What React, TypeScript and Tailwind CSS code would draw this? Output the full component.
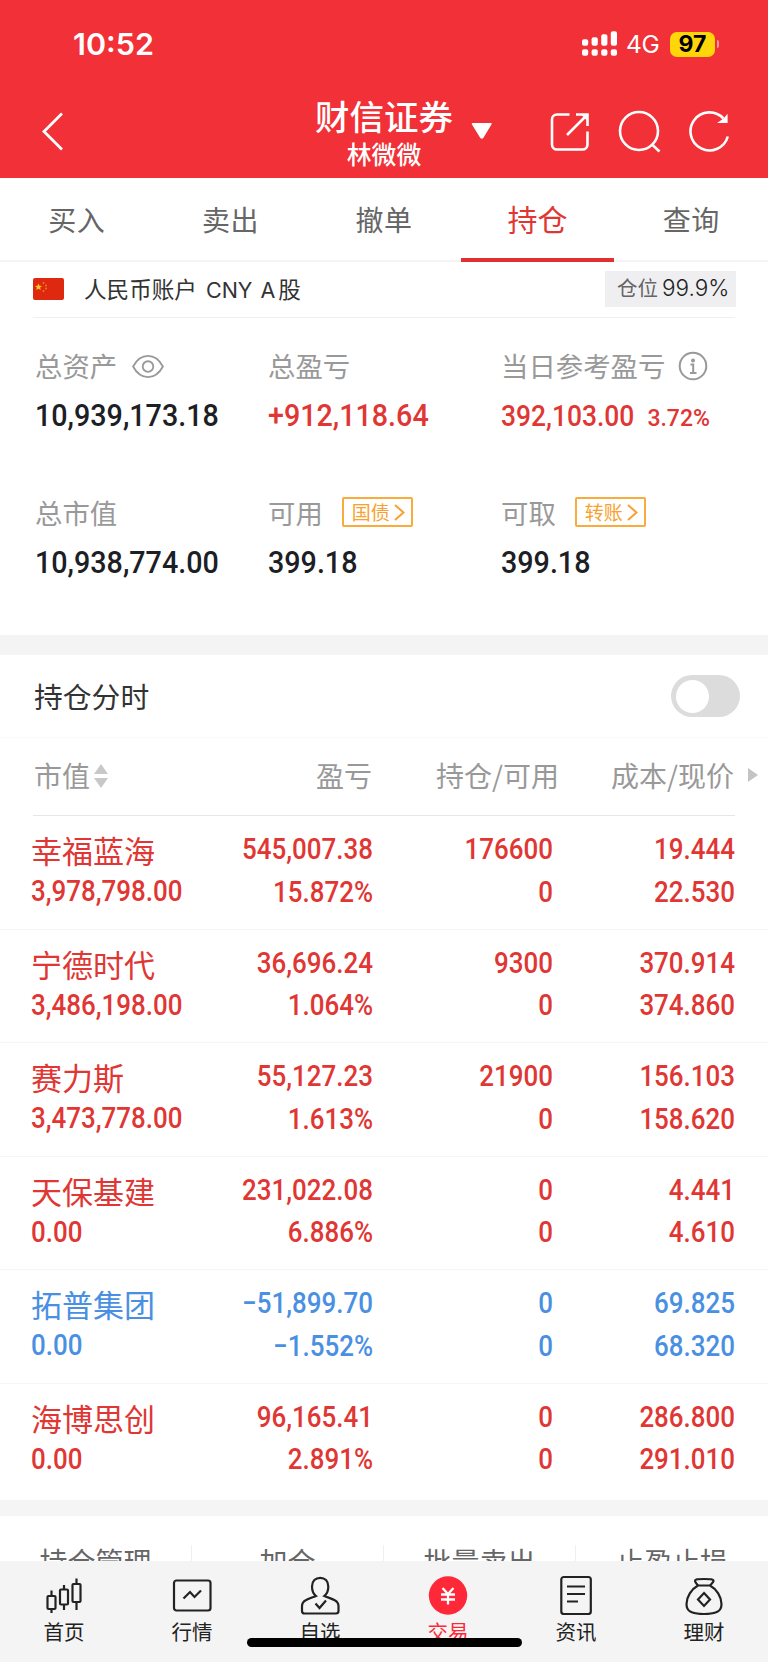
import { clsx } from "clsx"

type Holding = {
  name: string
  value: string
  profit: string
  rate: string
  amount: string
  available: string
  cost: string
  price: string
  down?: boolean
}

const TABS = ["买入", "卖出", "撤单", "持仓", "查询"]

const HOLDINGS: Holding[] = [
  { name: "幸福蓝海", value: "3,978,798.00", profit: "545,007.38", rate: "15.872%", amount: "176600", available: "0", cost: "19.444", price: "22.530" },
  { name: "宁德时代", value: "3,486,198.00", profit: "36,696.24", rate: "1.064%", amount: "9300", available: "0", cost: "370.914", price: "374.860" },
  { name: "赛力斯", value: "3,473,778.00", profit: "55,127.23", rate: "1.613%", amount: "21900", available: "0", cost: "156.103", price: "158.620" },
  { name: "天保基建", value: "0.00", profit: "231,022.08", rate: "6.886%", amount: "0", available: "0", cost: "4.441", price: "4.610" },
  { name: "拓普集团", value: "0.00", profit: "−51,899.70", rate: "−1.552%", amount: "0", available: "0", cost: "69.825", price: "68.320", down: true },
  { name: "海博思创", value: "0.00", profit: "96,165.41", rate: "2.891%", amount: "0", available: "0", cost: "286.800", price: "291.010" },
]

const ACTIONS = ["持仓管理", "加仓", "批量卖出", "止盈止损"]

function StatusBar() {
  return (
    <div className="flex h-[88px] items-center pl-[73px] pr-[49px] font-['Inter',sans-serif] text-white">
      <span className="text-[30.5px] font-semibold leading-none">10:52</span>
      <svg className="ml-auto" width="36" height="26" viewBox="0 0 36 26" fill="currentColor">
        <rect x="0" y="8.3" width="6.2" height="6.400" rx="2" />
        <rect x="9.600" y="6.300" width="6.200" height="8.400" rx="2" />
        <rect x="19.200" y="3.300" width="6.200" height="11.400" rx="2" />
        <rect x="28.800" y="0.300" width="6.200" height="14.400" rx="2" />
        <rect x="0" y="18.200" width="6.200" height="6.500" rx="2" />
        <rect x="9.600" y="18.200" width="6.200" height="6.500" rx="2" />
        <rect x="19.200" y="18.200" width="6.200" height="6.500" rx="2" />
        <rect x="28.800" y="18.200" width="6.200" height="6.500" rx="2" />
      </svg>
      <span className="ml-[8px] w-[34px] text-[24.500px] leading-none tracking-[-0.300px]">4G</span>
      <span className="ml-[10px] flex h-[25px] w-[45px] items-center justify-center rounded-[7px] bg-[#ffd60a] text-[23px] font-bold leading-none text-black">
        97
      </span>
      <span className="ml-[2px] h-[8px] w-[2px] rounded-r-full bg-white/50" />
    </div>
  )
}

function NavBar() {
  return (
    <div className="grid h-[90px] grid-cols-[300px_168px_300px] items-start text-white">
      <svg className="ml-[41px] mt-[24px]" width="23" height="39" viewBox="0 0 23 39" fill="none" stroke="currentColor" strokeWidth="2.800">
        <path d="M21 1.500 3 19.500 21 37.500" />
      </svg>
      <div className="text-center">
        <div className="mt-[7px] h-[40px] text-[34.500px] font-medium leading-[40px] whitespace-nowrap">财信证券</div>
        <div className="mt-[3px] h-[30px] text-[24.800px] font-medium leading-[30px]">林微微</div>
      </div>
      <div className="flex items-start">
        <svg className="ml-[3px] mt-[34px]" width="22" height="18" viewBox="0 0 22 18" fill="currentColor">
          <path d="M1.500 1h18.500a.8.8 0 0 1 .6 1.200L12.300 16a1.800 1.800 0 0 1-3 0L.8 2.200A.8.8 0 0 1 1.500 1z" />
        </svg>
        <svg className="ml-[55px] mt-[22px]" width="42" height="42" viewBox="0 0 42 42" fill="none" stroke="currentColor" strokeWidth="2.600">
          <path d="M21.500 4.500H9a5 5 0 0 0-5 5V34.500a5 5 0 0 0 5 5H34.500a5 5 0 0 0 5-5V21.500" />
          <path d="M19 25 38.500 5.500M28 4.500h11.500V16" />
          <path d="M33 4.500h6.500V11z" fill="currentColor" stroke="none" />
        </svg>
        <svg className="ml-[28px] mt-[22px]" width="44" height="44" viewBox="0 0 44 44" fill="none" stroke="currentColor" strokeWidth="2.600">
          <circle cx="21" cy="21" r="19" />
          <path d="m34 34.500 7.500 7" />
        </svg>
        <svg className="ml-[27px] mt-[22px]" width="44" height="44" viewBox="0 0 44 44" fill="none" stroke="currentColor" strokeWidth="2.600">
          <path d="M38.800 26.500A19 19 0 1 1 34.500 8.500" />
          <path d="M30 12.500H38V5.500L35.500 8.500z" fill="currentColor" stroke="currentColor" strokeWidth="1.200" />
        </svg>
      </div>
    </div>
  )
}

function Tabs() {
  return (
    <div className="grid h-[84px] grid-cols-5 border-b-2 border-[#f4f4f5] text-center">
      {TABS.map((tab) => (
        <div
          key={tab}
          className={clsx(
            "relative h-[84px]",
            tab === "持仓" ? "text-[30px] leading-[81px] text-[#e03634]" : "pt-px text-[28px] leading-[81px] tracking-[0.500px] text-[#666]",
          )}
        >
          {tab}
          {tab === "持仓" && <span className="absolute inset-x-0 bottom-0 h-[4px] bg-[#e03030]" />}
        </div>
      ))}
    </div>
  )
}

function AccountBar() {
  return (
    <div className="mx-[33px] flex h-[56px] items-center border-b border-[#f0f0f0]">
      <svg className="mt-[-2px]" width="31" height="22" viewBox="0 0 31 22">
        <rect width="31" height="22" rx="2" fill="#de2910" />
        <path fill="#ffc91f" d="m5.500 5.500 1 2.300 2.500.2-1.900 1.600.6 2.400-2.200-1.300-2.200 1.300.6-2.400L2 8l2.500-.2z" />
        <g fill="#f08020">
          <circle cx="10.500" cy="5" r=".9" />
          <circle cx="13" cy="7.500" r=".9" />
          <circle cx="13" cy="10.500" r=".9" />
          <circle cx="10.500" cy="13" r=".9" />
        </g>
      </svg>
      <div className="ml-[20px] flex items-baseline text-[22.600px] leading-[54px] text-[#333]">
        人民币账户
        <span className="ml-[9px] font-['Inter',sans-serif] text-[21.500px]">CNY</span>
        <span className="ml-[8px] mr-[3px] font-['Inter',sans-serif] text-[21.500px]">A</span>股
      </div>
      <div className="ml-auto mr-[-1px] mt-[-2px] flex h-[36px] w-[131px] items-baseline bg-[#efeff1] pl-[12px] text-[20.500px] leading-[32px] text-[#666]">
        仓位
        <span className="ml-[4px] font-['Inter',sans-serif] text-[22.500px] font-light text-[#222]">99.9%</span>
      </div>
    </div>
  )
}

function Label({ children }: { children: React.ReactNode }) {
  return <div className="flex h-[40px] items-center text-[27.400px] leading-[40px] whitespace-nowrap text-[#999]">{children}</div>
}

function Amount({ text, small, red }: { text: string; small?: boolean; red?: boolean }) {
  return (
    <span
      className={clsx(
        "inline-block origin-left font-['Roboto',sans-serif] font-medium leading-[40px]",
        small ? "scale-x-[0.91] text-[29px]" : "scale-x-[0.925] text-[31px]",
        red ? "text-[#e03634]" : "text-[#1c2024]",
      )}
    >
      {text}
    </span>
  )
}

function Tag({ children }: { children: string }) {
  return (
    <span className="ml-[19px] flex h-[30px] w-[71px] items-center rounded-[2px] border-2 border-[#f9ab3c] pl-[8px] text-[19px] leading-[26px] text-[#f9a12e]">
      {children}
      <svg className="ml-[4px]" width="11" height="17" viewBox="0 0 11 17" fill="none" stroke="currentColor" strokeWidth="2">
        <path d="m1 1 8.500 7.500L1 16" />
      </svg>
    </span>
  )
}

function Summary() {
  return (
    <div className="grid h-[317px] grid-cols-[233px_233px_1fr] content-start gap-y-[56px] pl-[35px] pt-[27px]">
      <div>
        <Label>
          总资产
          <svg className="ml-[15px] mt-[2px]" width="32" height="25" viewBox="0 0 33 26" fill="none" stroke="#999" strokeWidth="1.900">
            <path d="M1 13C5 5.500 10.500 2 16.500 2S28 5.500 32 13c-4 7.500-9.500 11-15.500 11S5 20.500 1 13z" />
            <circle cx="16.500" cy="13" r="5.500" />
          </svg>
        </Label>
        <div className="mt-[11px] h-[40px]"><Amount text="10,939,173.18" /></div>
      </div>
      <div>
        <Label>总盈亏</Label>
        <div className="mt-[11px] h-[40px]"><Amount text="+912,118.64" red /></div>
      </div>
      <div>
        <Label>
          当日参考盈亏
          <svg className="ml-[13px] mt-[2px]" width="30" height="30" viewBox="0 0 30 30" fill="none" stroke="#999" strokeWidth="2">
            <circle cx="15" cy="15" r="13.300" />
            <circle cx="15" cy="9.500" r="2" fill="#999" stroke="none" />
            <path d="M12.500 13.500H15.200V22M12 22h6.500" />
          </svg>
        </Label>
        <div className="mt-[11px] flex h-[40px] items-baseline">
          <Amount text="392,103.00" small red />
          <span className="font-['Roboto',sans-serif] text-[23px] font-medium text-[#e03634]">3.72%</span>
        </div>
      </div>
      <div>
        <Label>总市值</Label>
        <div className="mt-[11px] h-[40px]"><Amount text="10,938,774.00" /></div>
      </div>
      <div>
        <Label>可用<Tag>国债</Tag></Label>
        <div className="mt-[11px] h-[40px]"><Amount text="399.18" /></div>
      </div>
      <div>
        <Label>可取<Tag>转账</Tag></Label>
        <div className="mt-[11px] h-[40px]"><Amount text="399.18" /></div>
      </div>
    </div>
  )
}

function Pair({ top, bottom }: { top: string; bottom: string }) {
  return (
    <div className="flex origin-right scale-x-[0.885] flex-col items-end pt-[12px] font-['Roboto',sans-serif] text-[29.300px] font-medium leading-[42.500px]">
      <span>{top}</span>
      <span>{bottom}</span>
    </div>
  )
}

function HoldingRow({ item }: { item: Holding }) {
  return (
    <div
      className={clsx(
        "grid h-[113.500px] grid-cols-[190px_152px_180px_182px] border-b border-[#f6f6f6] pl-[31px] last:h-[116px] last:border-transparent",
        item.down ? "text-[#4a90e2]" : "text-[#e03634]",
      )}
    >
      <div>
        <div className="mt-[14px] h-[40px] text-[31px] leading-[40px]">{item.name}</div>
        <div className="origin-left scale-x-[0.885] font-['Roboto',sans-serif] text-[29.300px] font-medium leading-[43px]">{item.value}</div>
      </div>
      <Pair top={item.profit} bottom={item.rate} />
      <Pair top={item.amount} bottom={item.available} />
      <Pair top={item.cost} bottom={item.price} />
    </div>
  )
}

function Holdings() {
  return (
    <div>
      <div className="flex h-[83px] items-center border-b border-[#f9f9f9] pl-[34px] pr-[28px]">
        <span className="text-[28.800px] text-[#333]">持仓分时</span>
        <span className="ml-auto flex h-[42px] w-[69px] items-center rounded-full bg-[#dcdcdc] pl-[5px]">
          <span className="size-[33px] rounded-full bg-white" />
        </span>
      </div>
      <div className="mx-[33px] grid h-[78px] grid-cols-[190px_149px_187px_175px] border-b border-[#e6e6e6] text-right text-[28px] leading-[74px] whitespace-nowrap text-[#999]">
        <div className="flex h-[74px] items-center pl-px">
          市值
          <svg className="ml-[4px] mt-[2px]" width="14" height="24" viewBox="0 0 14 24" fill="#c8c8c8">
            <path d="m7 0 7 10H0zM7 24 0 14h14z" />
          </svg>
        </div>
        <div>盈亏</div>
        <div>持仓/可用</div>
        <div className="relative">
          成本/现价
          <svg className="absolute right-[-24px] top-[30px]" width="10" height="14" viewBox="0 0 10 14" fill="#c4c4c4">
            <path d="m0 0 10 7-10 7z" />
          </svg>
        </div>
      </div>
      <div>
        {HOLDINGS.map((item) => (
          <HoldingRow key={item.name} item={item} />
        ))}
      </div>
    </div>
  )
}

function CandlesIcon() {
  return (
    <svg width="40" height="40" viewBox="0 0 40 40" fill="none" stroke="#222" strokeWidth="2.200">
      <rect x="3.500" y="21" width="8" height="13" rx="1" />
      <path d="M7.500 15.500V21M7.500 34v4" />
      <rect x="16" y="14.500" width="8" height="15" rx="1" />
      <path d="M20 10v4.500M20 29.500v5.500" />
      <rect x="28.500" y="9" width="8" height="18" rx="1" />
      <path d="M32.500 3.500v5.500M32.500 27v8" />
    </svg>
  )
}

function QuotesIcon() {
  return (
    <svg width="40" height="40" viewBox="0 0 40 40" fill="none" stroke="#222" strokeWidth="2.200">
      <rect x="2" y="5.500" width="36.500" height="30" rx="2.500" />
      <path d="m11.500 23.500 6.500-6.500 4.500 5 6.500-6.500" />
    </svg>
  )
}

function WatchIcon() {
  return (
    <svg width="40" height="40" viewBox="0 0 40 40" fill="none" stroke="#222" strokeWidth="2.200">
      <path d="M16 21c-2.500-2-4-5.500-4-9.500C12 6 15.500 2.800 20.200 2.800S28.300 6 28.300 11.500c0 4-1.500 7.500-4 9.500 3.500 1.500 7.500 2.500 10.500 4.200 2.800 1.500 3.700 3.500 3.700 6V36c0 1.600-.9 2.500-2.500 2.500H4.500C2.900 38.500 2 37.600 2 36v-4.800c0-2.500.9-4.500 3.700-6C8.700 23.500 12.500 22.500 16 21z" />
      <path d="m15.500 28.500 4 4.500 6.500-7.500" />
    </svg>
  )
}

function TradeIcon() {
  return (
    <svg width="40" height="40" viewBox="0 0 40 40" fill="none" stroke="#fff" strokeWidth="2.300">
      <circle cx="20" cy="20.500" r="19.200" fill="#ff2838" stroke="none" />
      <path d="m14.500 13 5.500 6 5.500-6M20 19V29.500M13 19.500h14M13 24.500h14" />
    </svg>
  )
}

function NewsIcon() {
  return (
    <svg width="40" height="40" viewBox="0 0 40 40" fill="none" stroke="#222" strokeWidth="2.200">
      <rect x="5.300" y="2" width="29.500" height="37" rx="2.500" />
      <path d="M11 11.500h18M11 19h18M11 26.500h11" />
    </svg>
  )
}

function WealthIcon() {
  return (
    <svg width="40" height="40" viewBox="0 0 40 40" fill="none" stroke="#222" strokeWidth="2.200">
      <path d="M14 10.500c-1-1.500-3-3-3-4.400C11 4.300 13 4 20 4s9.500.3 9.500 2.100c0 1.200-2.500 2.900-3.500 4.400" />
      <path d="M14 10.500h12c6.500 3.500 11.500 11.500 11.500 18.500 0 6.500-3.500 10-17.500 10S2.500 35.500 2.500 29C2.500 22 7.500 14 14 10.500z" />
      <path d="m20 18 6 6.500-6 6.500-6-6.500z" />
    </svg>
  )
}

const NAV_ITEMS = [
  { label: "首页", icon: <CandlesIcon /> },
  { label: "行情", icon: <QuotesIcon /> },
  { label: "自选", icon: <WatchIcon /> },
  { label: "交易", icon: <TradeIcon />, active: true },
  { label: "资讯", icon: <NewsIcon /> },
  { label: "理财", icon: <WealthIcon /> },
]

function BottomNav() {
  return (
    <div className="relative grid h-[101px] shrink-0 grid-cols-6 bg-[#f4f4f4]">
      {NAV_ITEMS.map((item) => (
        <div key={item.label} className="flex flex-col items-center pt-[14px]">
          {item.icon}
          <span className={clsx("mt-[2px] text-[20.500px] leading-[28px]", item.active ? "text-[#ff2838]" : "text-[#222]")}>
            {item.label}
          </span>
        </div>
      ))}
      {/* Home indicator */}
      <span className="absolute bottom-[15px] left-[247px] h-[9px] w-[275px] rounded-full bg-black" />
    </div>
  )
}

export default function App() {
  return (
    <div className="flex h-[1662px] w-[768px] flex-col overflow-hidden bg-white font-['Noto_Sans_CJK_SC',sans-serif]">
      <header className="h-[178px] shrink-0 bg-[#f23037]">
        <StatusBar />
        <NavBar />
      </header>
      <Tabs />
      <AccountBar />
      <Summary />
      <div className="h-[20px] shrink-0 bg-[#f4f4f4]" />
      <Holdings />
      <div className="h-[16px] shrink-0 bg-[#f5f5f5]" />
      <div className="grid min-h-0 flex-1 grid-cols-4 overflow-hidden pt-[29px] text-center text-[28px] text-[#666]">
        {ACTIONS.map((action) => (
          <div key={action} className="h-[40px] border-r border-[#f0f0f0] leading-[33px] last:border-r-0">
            {action}
          </div>
        ))}
      </div>
      <BottomNav />
    </div>
  )
}
